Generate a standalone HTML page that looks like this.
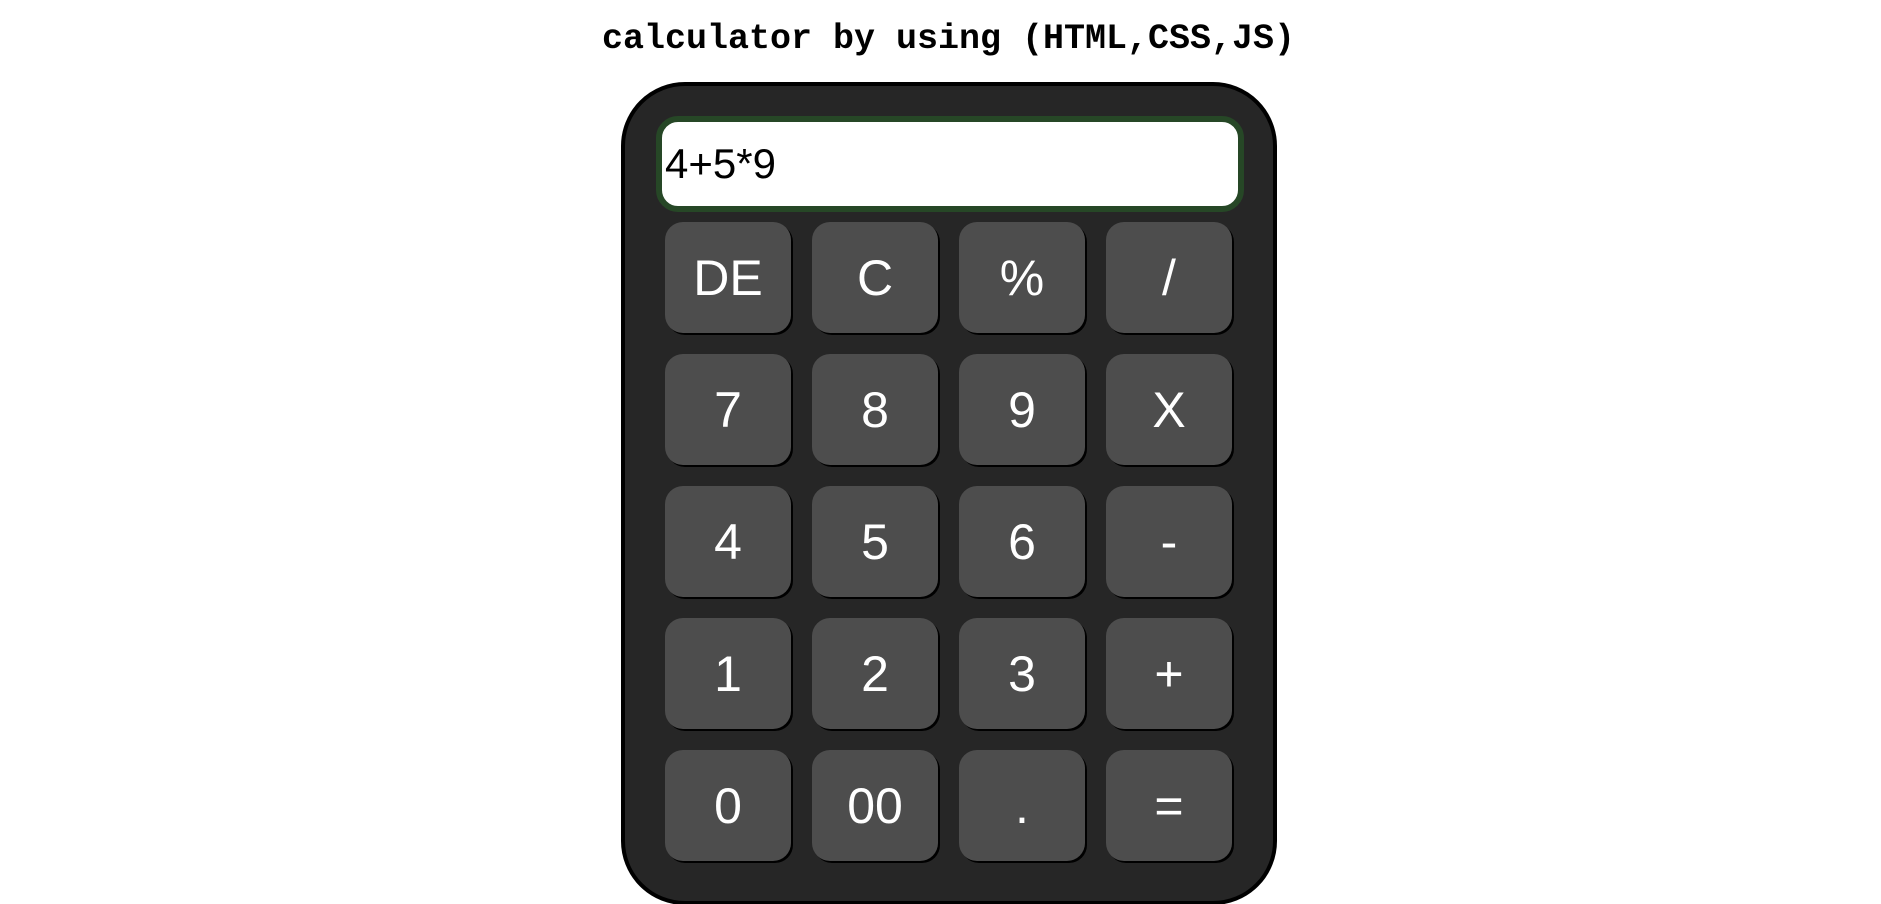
<!DOCTYPE html>
<html><head><meta charset="utf-8"><style>
html,body{margin:0;padding:0;background:#fff;width:1881px;height:904px;overflow:hidden;position:relative;}
h1{position:absolute;left:8px;width:1881px;top:15px;margin:0;text-align:center;font-family:"Liberation Mono",monospace;font-weight:bold;font-size:35px;line-height:48px;color:#000;}
.calc{position:absolute;left:621px;top:82px;width:648px;height:815px;background:#262626;border:4px solid #000;border-radius:64px;}
.disp{position:absolute;left:656px;top:116px;width:573px;height:84px;background:#fff;border:6px solid #264726;border-radius:22px;font-family:"Liberation Sans",sans-serif;font-size:42px;line-height:84px;padding-left:3px;box-sizing:content-box;}
.b{position:absolute;width:126px;height:111px;background:#4d4d4d;border-radius:18px;box-shadow:2px 2px 0 #000;color:#fff;font-family:"Liberation Sans",sans-serif;font-size:50px;display:flex;align-items:center;justify-content:center;}
</style></head><body>
<h1>calculator by using (HTML,CSS,JS)</h1>
<div class="calc"></div>
<div class="disp">4+5*9</div>
<div class="b" style="left:665px;top:222px">DE</div>
<div class="b" style="left:812px;top:222px">C</div>
<div class="b" style="left:959px;top:222px">%</div>
<div class="b" style="left:1106px;top:222px">/</div>
<div class="b" style="left:665px;top:354px">7</div>
<div class="b" style="left:812px;top:354px">8</div>
<div class="b" style="left:959px;top:354px">9</div>
<div class="b" style="left:1106px;top:354px">X</div>
<div class="b" style="left:665px;top:486px">4</div>
<div class="b" style="left:812px;top:486px">5</div>
<div class="b" style="left:959px;top:486px">6</div>
<div class="b" style="left:1106px;top:486px">-</div>
<div class="b" style="left:665px;top:618px">1</div>
<div class="b" style="left:812px;top:618px">2</div>
<div class="b" style="left:959px;top:618px">3</div>
<div class="b" style="left:1106px;top:618px">+</div>
<div class="b" style="left:665px;top:750px">0</div>
<div class="b" style="left:812px;top:750px">00</div>
<div class="b" style="left:959px;top:750px">.</div>
<div class="b" style="left:1106px;top:750px">=</div>
</body></html>
